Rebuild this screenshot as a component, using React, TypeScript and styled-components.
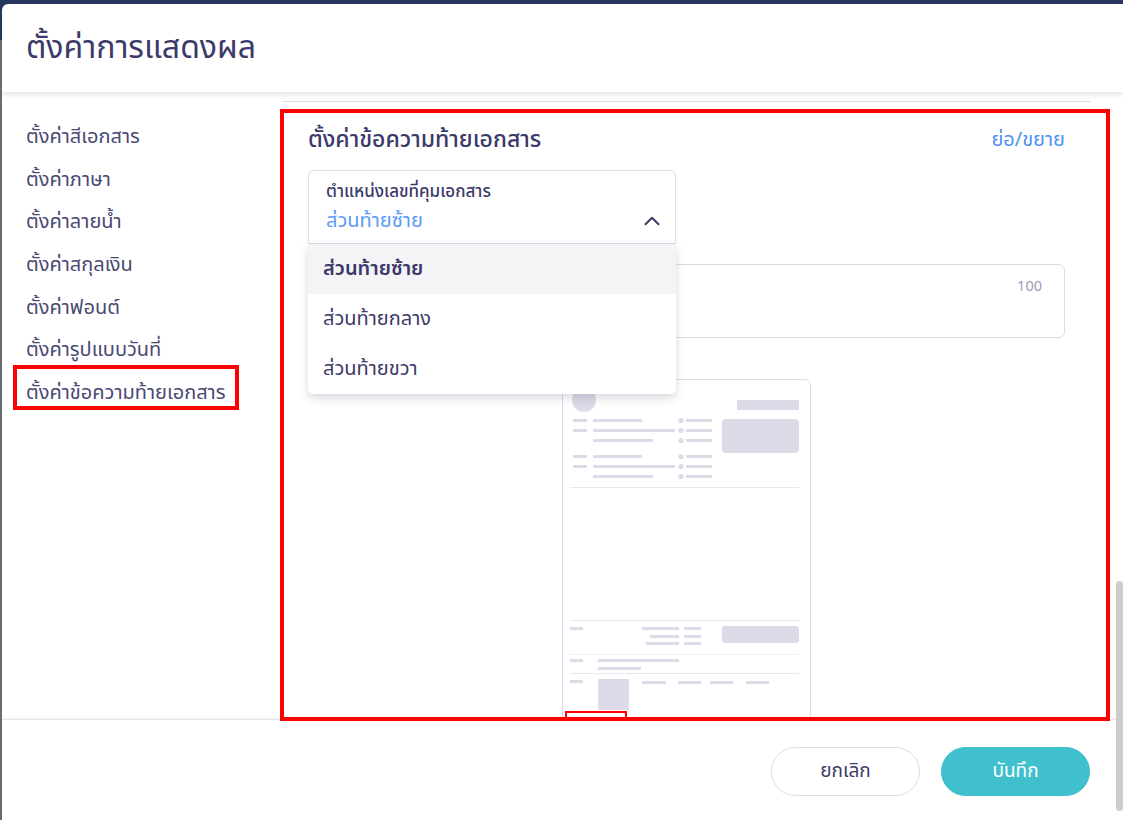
import React from "react";
import styled, { createGlobalStyle } from "styled-components";
import { ChevronUp } from "lucide-react";

const GlobalStyle = createGlobalStyle`
  html, body {
    margin: 0;
    padding: 0;
    width: 1123px;
    height: 820px;
    overflow: hidden;
    background: linear-gradient(to bottom, #27365c 0 40px, #6a6b70 40px);
  }
  * { box-sizing: border-box; }
  body {
    font-family: "Noto Sans Thai", "Noto Sans Thai UI", "Noto Sans", "DejaVu Sans", sans-serif;
  }
`;

const INK = "#3b3a68";
const INK_SOFT = "#4a4972";
const LINE = "#dcdbe8";
const SKEL = "#dcdbe7";

const Page = styled.div`
  position: relative;
  width: 1123px;
  height: 820px;
  padding: 4px 0 0 2px;
`;

const Modal = styled.div`
  width: 1121px;
  height: 816px;
  background: #ffffff;
  border-radius: 6px 0 0 0;
  display: flex;
  flex-direction: column;
  overflow: hidden;
`;

const Header = styled.header`
  height: 88px;
  flex: none;
  display: flex;
  align-items: center;
  padding-left: 24px;
  position: relative;
  z-index: 2;
  box-shadow: 0 2px 6px rgba(40, 40, 60, 0.16);
`;

const Title = styled.h1`
  margin: 0;
  font-size: 32px;
  font-weight: 400;
  color: ${INK};
  letter-spacing: 0;
`;

const Body = styled.div`
  height: 627px;
  flex: none;
  display: flex;
`;

const Sidebar = styled.nav`
  width: 279px;
  flex: none;
  padding: 24px 0 0 24px;
  display: flex;
  flex-direction: column;
`;

const NavItem = styled.div`
  font-size: 20px;
  line-height: 42.67px;
  color: ${INK_SOFT};
  white-space: nowrap;
`;

const Content = styled.div`
  flex: 1;
  overflow: hidden;
  padding: 0 32px 0 1px;
`;

const PrevSectionEnd = styled.div`
  height: 10px;
  border-bottom: 1px solid ${LINE};
`;

const Section = styled.section`
  padding: 23px 26px 0 26px;
  display: flex;
  flex-direction: column;
`;

const SectionHead = styled.div`
  height: 30px;
  display: flex;
  align-items: center;
  justify-content: space-between;
`;

const SectionTitle = styled.h2`
  margin: 0;
  font-size: 23px;
  font-weight: 500;
  color: ${INK};
`;

const ToggleLink = styled.a`
  font-size: 20px;
  color: #4f93ee;
  cursor: pointer;
`;

const SelectWrap = styled.div`
  position: relative;
  width: 368px;
  margin-top: 15px;
  z-index: 3;
`;

const SelectBox = styled.div<{ $open: boolean }>`
  height: 74px;
  border: 1px solid ${LINE};
  border-radius: ${(p) => (p.$open ? "6px 6px 0 0" : "6px")};
  padding: 11px 10px 3px 17px;
  display: flex;
  flex-direction: column;
  background: #fff;
`;

const FieldLabel = styled.div`
  font-size: 17px;
  line-height: 20px;
  font-weight: 500;
  color: ${INK};
`;

const ValueRow = styled.div`
  height: 38px;
  display: flex;
  align-items: center;
  justify-content: space-between;
`;

const Value = styled.span`
  font-size: 20px;
  color: #5a9cf8;
`;

const Menu = styled.ul`
  position: absolute;
  top: 100%;
  left: 0;
  right: 0;
  margin: 0;
  padding: 0;
  list-style: none;
  background: #fff;
  border-radius: 0 0 6px 6px;
  box-shadow: 0 4px 10px rgba(40, 40, 70, 0.18);
  overflow: hidden;
`;

const Option = styled.li<{ $active?: boolean }>`
  height: 50px;
  display: flex;
  align-items: center;
  padding-left: 15px;
  font-size: 20px;
  color: ${INK};
  font-weight: ${(p) => (p.$active ? 600 : 400)};
  background: ${(p) => (p.$active ? "#f4f4f7" : "#fff")};
`;

const TextArea = styled.div`
  margin-top: 20px;
  height: 74px;
  border: 1px solid ${LINE};
  border-radius: 6px;
  padding: 12px 22px 0 0;
  display: flex;
  justify-content: flex-end;
`;

const Counter = styled.span`
  font-size: 14.5px;
  line-height: 20px;
  color: #9b9ab8;
`;

const Preview = styled.div`
  align-self: center;
  margin-top: 41px;
  width: 249px;
  height: 360px;
  flex: none;
  border: 1px solid ${LINE};
  border-radius: 6px;
  overflow: hidden;
`;

const Footer = styled.footer`
  flex: 1;
  border-top: 1px solid #e6e6ee;
  box-shadow: 0 -1px 3px rgba(40, 40, 60, 0.06);
  display: flex;
  justify-content: flex-end;
  align-items: flex-start;
  gap: 21px;
  padding: 27px 33px 0 0;
  position: relative;
  z-index: 2;
  background: #fff;
`;

const Button = styled.button<{ $primary?: boolean }>`
  width: 149px;
  height: 49px;
  border-radius: 25px;
  font-family: inherit;
  font-size: 19px;
  cursor: pointer;
  border: 1px solid ${(p) => (p.$primary ? "#40bfcc" : LINE)};
  background: ${(p) => (p.$primary ? "#40bfcc" : "#fff")};
  color: ${(p) => (p.$primary ? "#fff" : INK)};
`;

const ScrollThumb = styled.div`
  position: absolute;
  left: 1116px;
  top: 581px;
  width: 7px;
  height: 230px;
  border-radius: 4px;
  background: #cdcdcd;
  z-index: 5;
`;

const Mark = styled.div<{ $w: number }>`
  position: absolute;
  border: ${(p) => p.$w}px solid #ff0000;
  pointer-events: none;
  z-index: 10;
`;

const navItems = [
  "ตั้งค่าสีเอกสาร",
  "ตั้งค่าภาษา",
  "ตั้งค่าลายน้ำ",
  "ตั้งค่าสกุลเงิน",
  "ตั้งค่าฟอนต์",
  "ตั้งค่ารูปแบบวันที่",
  "ตั้งค่าข้อความท้ายเอกสาร",
];

const options = ["ส่วนท้ายซ้าย", "ส่วนท้ายกลาง", "ส่วนท้ายขวา"];

function Bar({ x, y, w, h = 3 }: { x: number; y: number; w: number; h?: number }) {
  return <rect x={x} y={y} width={w} height={h} fill={SKEL} />;
}

function InfoGroup({ y }: { y: number }) {
  return (
    <g>
      <Bar x={10} y={y} w={14} />
      <Bar x={30} y={y} w={49} />
      <Bar x={10} y={y + 10} w={14} />
      <Bar x={30} y={y + 10} w={82} />
      <Bar x={30} y={y + 20} w={60} />
      {[0, 10, 20].map((d) => (
        <g key={d}>
          <circle cx={118} cy={y + d + 1.5} r={2.6} fill={SKEL} />
          <Bar x={123} y={y + d} w={26} />
        </g>
      ))}
    </g>
  );
}

function DocPreview() {
  return (
    <svg width="247" height="358" viewBox="0 0 247 358">
      <circle cx={21} cy={20} r={12} fill={SKEL} />
      <rect x={174} y={20} width={62} height={10} fill={SKEL} />
      <InfoGroup y={39} />
      <InfoGroup y={75} />
      <rect x={159} y={39} width={77} height={34} rx={4} fill={SKEL} />
      <line x1={7} x2={236} y1={107.5} y2={107.5} stroke="#e8e7ef" />
      <line x1={7} x2={236} y1={240.5} y2={240.5} stroke="#e8e7ef" />
      <Bar x={7} y={247} w={13} />
      <Bar x={79} y={247} w={37} />
      <Bar x={121} y={247} w={17} />
      <Bar x={87} y={255} w={29} />
      <Bar x={121} y={255} w={17} />
      <Bar x={83} y={262} w={33} />
      <Bar x={121} y={262} w={17} />
      <rect x={159} y={246} width={77} height={17} rx={3} fill={SKEL} />
      <line x1={7} x2={236} y1={274.5} y2={274.5} stroke="#efeef4" />
      <Bar x={7} y={279} w={13} />
      <Bar x={35} y={279} w={81} />
      <Bar x={35} y={287} w={43} />
      <line x1={7} x2={236} y1={293.5} y2={293.5} stroke="#e8e7ef" />
      <Bar x={7} y={300} w={13} />
      <rect x={35} y={299} width={31} height={31} fill={SKEL} />
      <Bar x={79} y={301} w={24} />
      <Bar x={115} y={301} w={23} />
      <Bar x={147} y={301} w={23} />
      <Bar x={183} y={301} w={23} />
    </svg>
  );
}

export default function App() {
  return (
    <>
      <GlobalStyle />
      <Page>
        <Modal>
          <Header>
            <Title>ตั้งค่าการแสดงผล</Title>
          </Header>
          <Body>
            <Sidebar>
              {navItems.map((t) => (
                <NavItem key={t}>{t}</NavItem>
              ))}
            </Sidebar>
            <Content>
              <PrevSectionEnd />
              <Section>
                <SectionHead>
                  <SectionTitle>ตั้งค่าข้อความท้ายเอกสาร</SectionTitle>
                  <ToggleLink>ย่อ/ขยาย</ToggleLink>
                </SectionHead>
                <SelectWrap>
                  <SelectBox $open>
                    <FieldLabel>ตำแหน่งเลขที่คุมเอกสาร</FieldLabel>
                    <ValueRow>
                      <Value>ส่วนท้ายซ้าย</Value>
                      <ChevronUp size={26} strokeWidth={1.8} color={INK} />
                    </ValueRow>
                  </SelectBox>
                  <Menu>
                    {options.map((o, i) => (
                      <Option key={o} $active={i === 0}>
                        {o}
                      </Option>
                    ))}
                  </Menu>
                </SelectWrap>
                <TextArea>
                  <Counter>100</Counter>
                </TextArea>
                <Preview>
                  <DocPreview />
                </Preview>
              </Section>
            </Content>
          </Body>
          <Footer>
            <Button>ยกเลิก</Button>
            <Button $primary>บันทึก</Button>
          </Footer>
        </Modal>
        <ScrollThumb />
        <Mark $w={4} style={{ left: 13, top: 365, width: 226, height: 45 }} />
        <Mark $w={4} style={{ left: 280, top: 109, width: 830, height: 612 }} />
        <Mark $w={2} style={{ left: 565, top: 711, width: 62, height: 9 }} />
      </Page>
    </>
  );
}
